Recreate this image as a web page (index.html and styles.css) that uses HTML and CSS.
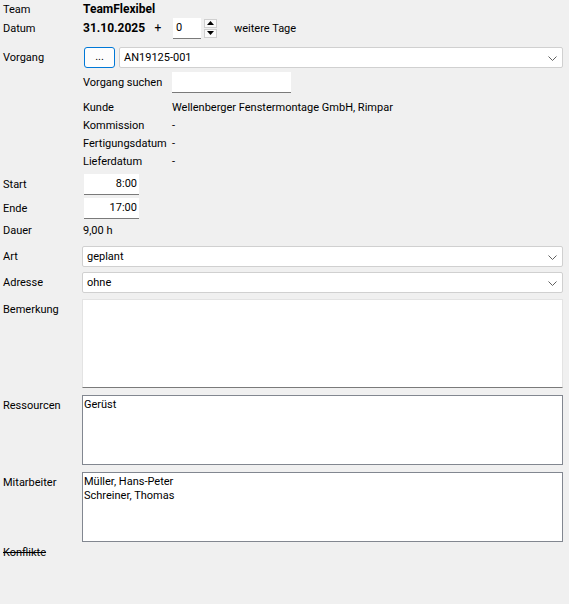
FILE: index.html
```html
<!DOCTYPE html>
<html lang="de">
<head>
  <meta charset="UTF-8">
  <title>Termin</title>
  <link rel="stylesheet" href="styles.css">
</head>
<body>
<div class="form">
  <div class="row r-team">
    <span class="label">Team</span>
    <b>TeamFlexibel</b>
  </div>
  <div class="row r-datum">
    <span class="label">Datum</span>
    <b class="date">31.10.2025</b>
    <span class="plus">+</span>
    <div class="field spin-field">0</div>
    <div class="spin">
      <span class="spin-btn"><svg width="7" height="4" viewBox="0 0 7 4"><path d="M0 4L3.5 0L7 4Z" fill="#000"/></svg></span>
      <span class="spin-btn"><svg width="7" height="4" viewBox="0 0 7 4"><path d="M0 0L3.5 4L7 0Z" fill="#000"/></svg></span>
    </div>
    <span class="days">weitere Tage</span>
  </div>

  <div class="row r-vorgang">
    <span class="label">Vorgang</span>
    <div class="dots">...</div>
    <div class="select">AN19125-001
      <svg class="chev" width="9" height="5" viewBox="0 0 9 5"><path d="M0.5 0.5L4.5 4.5L8.5 0.5" fill="none" stroke="#606060"/></svg>
    </div>
  </div>
  <div class="row r-suche">
    <span class="label"></span>
    <span class="sublabel">Vorgang suchen</span>
    <div class="field search-field"></div>
  </div>

  <div class="info">
    <div class="info-row"><span class="sublabel">Kunde</span><span>Wellenberger Fenstermontage GmbH, Rimpar</span></div>
    <div class="info-row"><span class="sublabel">Kommission</span><span>-</span></div>
    <div class="info-row"><span class="sublabel">Fertigungsdatum</span><span>-</span></div>
    <div class="info-row"><span class="sublabel">Lieferdatum</span><span>-</span></div>
  </div>

  <div class="row r-start">
    <span class="label">Start</span>
    <div class="field time-field">8:00</div>
  </div>
  <div class="row r-ende">
    <span class="label">Ende</span>
    <div class="field time-field">17:00</div>
  </div>
  <div class="row r-dauer">
    <span class="label">Dauer</span>
    <span>9,00 h</span>
  </div>

  <div class="row r-art">
    <span class="label">Art</span>
    <div class="select wide">geplant
      <svg class="chev" width="9" height="5" viewBox="0 0 9 5"><path d="M0.5 0.5L4.5 4.5L8.5 0.5" fill="none" stroke="#606060"/></svg>
    </div>
  </div>
  <div class="row r-adresse">
    <span class="label">Adresse</span>
    <div class="select wide">ohne
      <svg class="chev" width="9" height="5" viewBox="0 0 9 5"><path d="M0.5 0.5L4.5 4.5L8.5 0.5" fill="none" stroke="#606060"/></svg>
    </div>
  </div>

  <div class="row box-row r-bemerkung">
    <span class="label">Bemerkung</span>
    <div class="memo"></div>
  </div>
  <div class="row box-row r-ressourcen">
    <span class="label">Ressourcen</span>
    <div class="list">Gerüst</div>
  </div>
  <div class="row box-row r-mitarbeiter">
    <span class="label">Mitarbeiter</span>
    <div class="list">Müller, Hans-Peter<br>Schreiner, Thomas</div>
  </div>

  <div class="konflikte">Konflikte</div>
</div>
</body>
</html>
```

FILE: styles.css
```css
body {
  margin: 0;
  background-color: #f0f0f0;
  font-family: Roboto, "Liberation Sans", sans-serif;
  font-size: 11px;
  color: #000;
}
.form {
  padding: 0 6px 0 3px;
}
.row {
  display: flex;
  align-items: center;
}
.label {
  width: 80px;
  flex-shrink: 0;
}
.r-team {
  height: 17px;
  padding-top: 1px;
  box-sizing: border-box;
}
.r-team b {
  font-size: 12px;
}
.r-datum {
  height: 22px;
}
.date {
  width: 60px;
  font-size: 12px;
}
.plus {
  width: 30px;
  text-align: center;
  font-size: 12px;
}
.field {
  background-color: #fff;
  border-bottom: 1px solid #7a7a7a;
  box-sizing: border-box;
  height: 21px;
  line-height: 20px;
}
.spin-field {
  width: 28px;
  padding-left: 3px;
}
.spin {
  display: flex;
  flex-direction: column;
  gap: 1px;
  margin-left: 3px;
}
.spin-btn {
  width: 13px;
  height: 9px;
  box-sizing: border-box;
  border: 1px solid #cfcfcf;
  background-color: #fafafa;
  display: flex;
  align-items: center;
  justify-content: center;
}
.days {
  margin-left: 17px;
}
.r-vorgang {
  margin-top: 8px;
  height: 20px;
}
.dots {
  width: 31px;
  height: 21px;
  box-sizing: border-box;
  margin-left: 1px;
  border: 1px solid #0078d7;
  border-radius: 3px;
  background-color: #fdfdfd;
  text-align: center;
  line-height: 17px;
}
.select {
  position: relative;
  flex: 1;
  height: 21px;
  box-sizing: border-box;
  margin-left: 4px;
  padding-left: 4px;
  border: 1px solid #d0d0d0;
  border-radius: 2px;
  background-color: #fff;
  line-height: 19px;
}
.select.wide {
  margin-left: -1px;
}
.chev {
  position: absolute;
  right: 5px;
  top: 8px;
}
.r-suche {
  margin-top: 5px;
  height: 20px;
}
.sublabel {
  width: 89px;
  flex-shrink: 0;
}
.search-field {
  width: 119px;
}
.info {
  margin-top: 6px;
  padding-left: 80px;
}
.info-row {
  display: flex;
  align-items: center;
  height: 18px;
}
.r-start {
  margin-top: 4px;
  height: 20px;
}
.r-ende {
  margin-top: 4px;
  height: 20px;
}
.time-field {
  width: 55px;
  margin-left: 1px;
  text-align: right;
  padding-right: 2px;
}
.r-dauer {
  margin-top: 2px;
  height: 20px;
}
.r-art {
  margin-top: 6px;
  height: 20px;
}
.r-adresse {
  margin-top: 6px;
  height: 20px;
}
.box-row {
  align-items: flex-start;
}
.box-row .label {
  padding-top: 4px;
}
.memo {
  flex: 1;
  height: 89px;
  box-sizing: border-box;
  margin-left: -1px;
  border: 1px solid #e3e3e3;
  border-bottom-color: #7a7a7a;
  background-color: #fff;
}
.r-bemerkung {
  margin-top: 7px;
}
.list {
  flex: 1;
  height: 70px;
  box-sizing: border-box;
  margin-left: -1px;
  border: 1px solid #828790;
  background-color: #fff;
  padding: 2px 1px;
  line-height: 14px;
}
.r-ressourcen {
  margin-top: 7px;
}
.r-mitarbeiter {
  margin-top: 7px;
}
.konflikte {
  margin-top: 2px;
  height: 18px;
  line-height: 18px;
  text-decoration: line-through;
}
```
